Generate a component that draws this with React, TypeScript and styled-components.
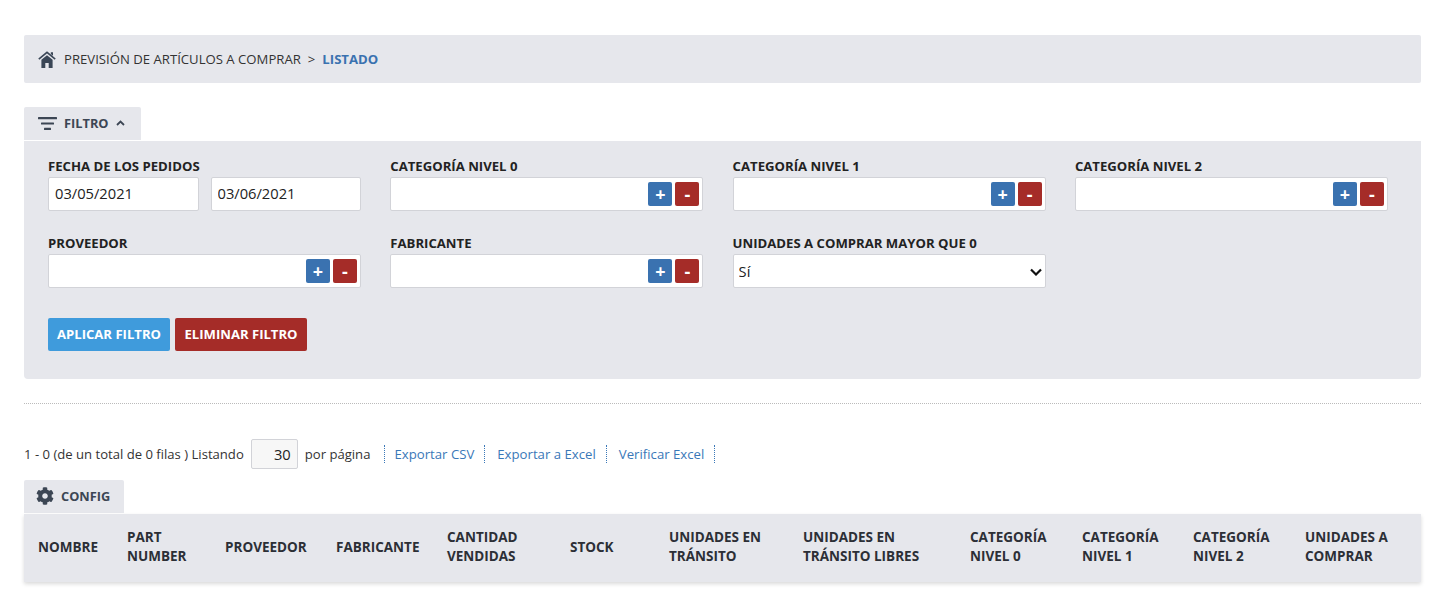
import {createGlobalStyle, styled} from 'styled-components';
import {FaCog} from 'react-icons/fa';

const GlobalStyle = createGlobalStyle`
    html, body {
        margin: 0;
        padding: 0;
        background: #fff;
        font-family: 'Open Sans', 'Liberation Sans', sans-serif;
        color: #222;
    }
`;

const Page = styled.div`
    padding: 35px 19px 24px 24px;
`;

const Breadcrumb = styled.div`
    display: flex;
    align-items: center;
    height: 48px;
    padding-left: 14px;
    background: #e6e7ec;
    border-radius: 2px;
    font-size: 13.15px;
    color: #333;
`;

const HomeSvg = styled.svg`
    margin-right: 8px;
    fill: #3a4656;
    stroke: #3a4656;
`;

const Separator = styled.span`
    margin: 0 7px;
`;

const Current = styled.span`
    font-weight: 700;
    color: #3a72b0;
`;

const Tab = styled.div<{$width: number; $top: number; $inset: number}>`
    display: flex;
    align-items: center;
    width: ${props => props.$width}px;
    height: 33px;
    margin-top: ${props => props.$top}px;
    margin-bottom: 1px;
    box-sizing: border-box;
    padding: 0 0 1px ${props => props.$inset}px;
    background: #e6e7ec;
    border-radius: 2px 2px 0 0;
    font-size: 12.8px;
    font-weight: 700;
    color: #3c4654;
`;

const TabLabel = styled.span`
    margin-left: 7px;
`;

const FilterPanel = styled.div`
    box-sizing: border-box;
    height: 238px;
    padding: 18px 24px 0;
    background: #e6e7ec;
    border-radius: 0 0 4px 4px;
`;

const FieldGrid = styled.div`
    display: grid;
    grid-template-columns: repeat(4, 313px);
    column-gap: 29.3px;
    row-gap: 25.4px;
`;

const Field = styled.div`
    display: flex;
    flex-direction: column;
`;

const FieldLabel = styled.label`
    height: 14px;
    margin-bottom: 4px;
    font-size: 13.15px;
    line-height: 14px;
    font-weight: 700;
    color: #222;
    white-space: nowrap;
`;

const DateRow = styled.div`
    display: flex;
    justify-content: space-between;
`;

const DateInput = styled.input`
    box-sizing: border-box;
    width: 150.5px;
    height: 34px;
    padding: 0 6px 2px;
    background: #fff;
    border: 1px solid #d2d3d8;
    border-radius: 2px;
    font-family: inherit;
    font-size: 14.7px;
    color: #222;
`;

const PickerBox = styled.div`
    display: flex;
    justify-content: flex-end;
    align-items: center;
    gap: 3px;
    box-sizing: border-box;
    height: 34px;
    padding-right: 3px;
    background: #fff;
    border: 1px solid #d2d3d8;
    border-radius: 2px;
`;

const MiniButton = styled.button<{$danger?: boolean}>`
    width: 24px;
    height: 24px;
    padding: 0;
    border: none;
    border-radius: 2px;
    background: ${props => (props.$danger ? '#a52c28' : '#3a72b0')};
    color: #fff;
    font-family: inherit;
    font-size: 18px;
    line-height: 24px;
    font-weight: 700;
`;

const SelectWrap = styled.div`
    position: relative;
    height: 34px;
`;

const Select = styled.select`
    appearance: none;
    box-sizing: border-box;
    display: block;
    width: 100%;
    height: 34px;
    padding: 0 5px;
    background: #fff;
    border: 1px solid #d2d3d8;
    border-radius: 2px;
    font-family: inherit;
    font-size: 14.7px;
    color: #222;
`;

const SelectArrow = styled.svg`
    position: absolute;
    right: 4px;
    top: 14px;
    pointer-events: none;
`;

const Actions = styled.div`
    display: flex;
    gap: 5px;
    margin-top: 30px;
`;

const ActionButton = styled.button<{$danger?: boolean}>`
    height: 33px;
    padding: 0 ${props => (props.$danger ? 9.5 : 9)}px 2px;
    border: none;
    border-radius: 2px;
    background: ${props => (props.$danger ? '#a52c28' : '#3f9bdc')};
    color: #fff;
    font-family: inherit;
    font-size: 13.1px;
    font-weight: 700;
`;

const Divider = styled.hr`
    margin: 24px 0 0;
    border: none;
    border-top: 1px dotted #bbb;
`;

const Pagination = styled.div`
    display: flex;
    align-items: center;
    height: 30px;
    margin-top: 35px;
    font-size: 13.1px;
    color: #333;
`;

const PerPage = styled.input`
    box-sizing: border-box;
    width: 47px;
    height: 30px;
    margin: 0 7px;
    padding: 0 6px;
    text-align: right;
    background: #f7f7f7;
    border: 1px solid #d2d3d8;
    border-radius: 2px;
    font-family: inherit;
    font-size: 14.7px;
    color: #222;
`;

const ExportLink = styled.a`
    padding: 0 10px 0 12px;
    border-left: 1px dotted #3a78b8;
    color: #3a78b8;
    font-size: 13.2px;
    line-height: 18px;
    &:first-of-type {
        margin-left: 14px;
        padding-left: 9px;
    }
    &:last-of-type {
        border-right: 1px dotted #3a78b8;
    }
`;

const TableHeader = styled.div`
    display: grid;
    grid-template-columns: 89px 98px 111px 111px 123px 99px 134px 167px 112px 111px 112px 130px;
    align-items: center;
    box-sizing: border-box;
    height: 68px;
    padding-bottom: 2px;
    background: #e6e7ec;
    box-shadow: 0 2px 4px rgba(0, 0, 0, 0.15);
`;

const HeaderCell = styled.div`
    padding-left: 14px;
    font-size: 13.5px;
    line-height: 19px;
    font-weight: 700;
    color: #2c2f36;
`;

const HomeIcon = () => (
    <HomeSvg width="18" height="17" viewBox="0 0 18 17">
        <path strokeWidth="0" d="M9 4.2l5.6 4.6V17h-3.9v-5H7.3v5H3.4V8.8z" />
        <path fill="none" strokeWidth="1.6" d="M0.8 8.2L9 1.4l8.2 6.8" />
        <path strokeWidth="0" d="M12.8 1.2h2.2v3.6l-2.2-1.8z" />
    </HomeSvg>
);

const FilterIcon = () => (
    <svg width="19" height="13" viewBox="0 0 19 13" fill="#3c4654">
        <rect x="0" y="0" width="19" height="2.2" rx="0.5" />
        <rect x="3" y="5.4" width="13" height="2.2" rx="0.5" />
        <rect x="6" y="10.8" width="7" height="2.2" rx="0.5" />
    </svg>
);

const ChevronUp = () => (
    <svg width="9" height="6" viewBox="0 0 9 6" fill="none" stroke="#3c4654" strokeWidth="1.8" style={{marginLeft: 7}}>
        <path d="M1 5l3.5-3.5L8 5" />
    </svg>
);

const Picker = () => (
    <PickerBox>
        <MiniButton>+</MiniButton>
        <MiniButton $danger>-</MiniButton>
    </PickerBox>
);

const columns = [
    'NOMBRE',
    'PART NUMBER',
    'PROVEEDOR',
    'FABRICANTE',
    'CANTIDAD VENDIDAS',
    'STOCK',
    'UNIDADES EN TRÁNSITO',
    'UNIDADES EN TRÁNSITO LIBRES',
    'CATEGORÍA NIVEL 0',
    'CATEGORÍA NIVEL 1',
    'CATEGORÍA NIVEL 2',
    'UNIDADES A COMPRAR',
];

const App = () => {
    return (
        <Page>
            <GlobalStyle />
            <Breadcrumb>
                <HomeIcon />
                PREVISIÓN DE ARTÍCULOS A COMPRAR
                <Separator>&gt;</Separator>
                <Current>LISTADO</Current>
            </Breadcrumb>

            <Tab $width={117} $top={24} $inset={14}>
                <FilterIcon />
                <TabLabel>FILTRO</TabLabel>
                <ChevronUp />
            </Tab>
            <FilterPanel>
                <FieldGrid>
                    <Field>
                        <FieldLabel>FECHA DE LOS PEDIDOS</FieldLabel>
                        <DateRow>
                            <DateInput defaultValue="03/05/2021" />
                            <DateInput defaultValue="03/06/2021" />
                        </DateRow>
                    </Field>
                    <Field>
                        <FieldLabel>CATEGORÍA NIVEL 0</FieldLabel>
                        <Picker />
                    </Field>
                    <Field>
                        <FieldLabel>CATEGORÍA NIVEL 1</FieldLabel>
                        <Picker />
                    </Field>
                    <Field>
                        <FieldLabel>CATEGORÍA NIVEL 2</FieldLabel>
                        <Picker />
                    </Field>
                    <Field>
                        <FieldLabel>PROVEEDOR</FieldLabel>
                        <Picker />
                    </Field>
                    <Field>
                        <FieldLabel>FABRICANTE</FieldLabel>
                        <Picker />
                    </Field>
                    <Field>
                        <FieldLabel>UNIDADES A COMPRAR MAYOR QUE 0</FieldLabel>
                        <SelectWrap>
                            <Select defaultValue="si">
                                <option value="si">Sí</option>
                                <option value="no">No</option>
                            </Select>
                            <SelectArrow width="12" height="8" viewBox="0 0 12 8" fill="none" stroke="#111" strokeWidth="2.2">
                                <path d="M1 1.5l5 5 5-5" />
                            </SelectArrow>
                        </SelectWrap>
                    </Field>
                </FieldGrid>
                <Actions>
                    <ActionButton>APLICAR FILTRO</ActionButton>
                    <ActionButton $danger>ELIMINAR FILTRO</ActionButton>
                </Actions>
            </FilterPanel>

            <Divider />

            <Pagination>
                1 - 0 (de un total de 0 filas ) Listando
                <PerPage defaultValue="30" />
                por página
                <ExportLink>Exportar CSV</ExportLink>
                <ExportLink>Exportar a Excel</ExportLink>
                <ExportLink>Verificar Excel</ExportLink>
            </Pagination>

            <Tab $width={100} $top={11} $inset={12}>
                <FaCog size={18} />
                <TabLabel>CONFIG</TabLabel>
            </Tab>
            <TableHeader>
                {columns.map(column => (
                    <HeaderCell key={column}>{column}</HeaderCell>
                ))}
            </TableHeader>
        </Page>
    );
};

export default App;
